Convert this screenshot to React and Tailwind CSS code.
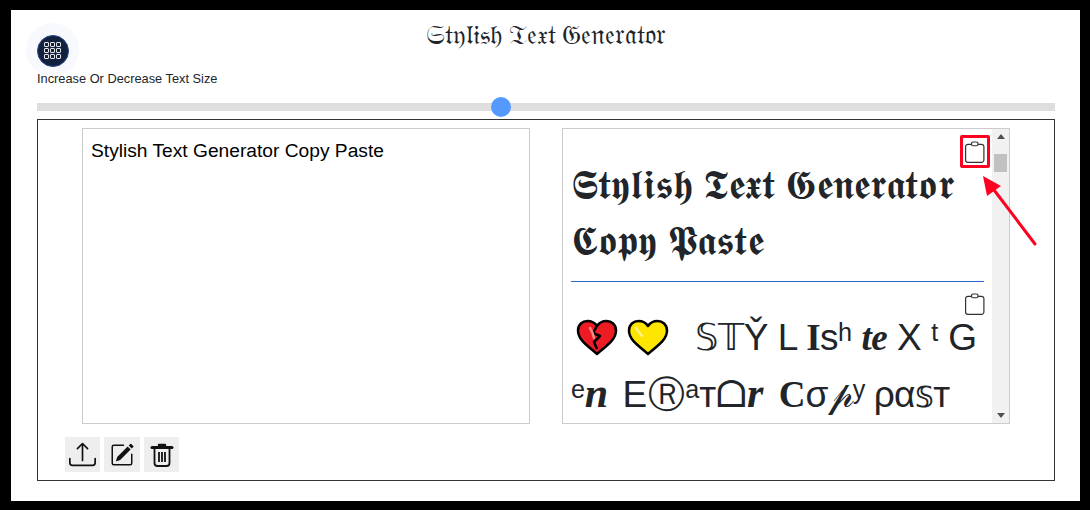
import React from 'react';

const ClipIcon = ({ className }) => (
    <svg viewBox="0 0 20 23" preserveAspectRatio="none" className={className} fill="none" stroke="#333" strokeWidth="1.2">
        <path d="M6.500 3.500H3a2.400 2.400 0 0 0-2.400 2.400v14a2.400 2.400 0 0 0 2.400 2.400h13.500a2.400 2.400 0 0 0 2.400-2.400v-14a2.400 2.400 0 0 0-2.400-2.400H13" />
        <rect x="6.500" y="1" width="6.500" height="4" rx="1.500" />
    </svg>
);

const heart = "M21 35 C12 27 2 21 2 11.500 C2 5.500 6.500 2 11.500 2 C15.500 2 19 4 21 7 C23 4 26.500 2 30.500 2 C35.500 2 40 5.500 40 11.500 C40 21 30 27 21 35Z";

const BrokenHeart = () => (
    <svg viewBox="0 0 42 38" className="w-[42px] h-[38px]">
        <path d={heart} fill="#ed1c24" stroke="#000" strokeWidth="2.500" strokeLinejoin="round" />
        <path d="M21 7 L17 14 L24 17 L18 23 L21 30" fill="none" stroke="#000" strokeWidth="2.500" strokeLinejoin="round" />
        <path d="M14 9 C16 12 17 14 18 19" fill="none" stroke="#f7897f" strokeWidth="2.500" strokeLinecap="round" />
    </svg>
);

const YellowHeart = () => (
    <svg viewBox="0 0 42 38" className="w-[42px] h-[38px]">
        <path d={heart} fill="#ffe600" stroke="#000" strokeWidth="2.500" strokeLinejoin="round" />
        <path d="M9 9 C11 12 13 14 15 17" fill="none" stroke="#fff38a" strokeWidth="2.500" strokeLinecap="round" />
    </svg>
);

const App = () => {
    return (
        <div className="w-[1090px] h-[510px] bg-black pt-[10px] pl-[11px] pr-[10px] pb-[9px] overflow-hidden font-['Liberation_Sans',sans-serif] text-[#212529]">
            <div className="relative w-full h-full bg-white pl-[26px] pr-[25px] flex flex-col">
                {/* Title + size control */}
                <div className="relative h-[83px]">
                    <h1 className="absolute left-0 right-0 top-[9px] text-center text-[27px] leading-[32px] font-normal font-['Liberation_Serif','DejaVu_Serif',serif]">𝔖𝔱𝔶𝔩𝔦𝔰𝔥 𝔗𝔢𝔵𝔱 𝔊𝔢𝔫𝔢𝔯𝔞𝔱𝔬𝔯</h1>
                    <div className="absolute left-[-11px] top-[13px] w-[53px] h-[53px] pt-[2px] rounded-full bg-[#f7f9fc] flex items-center justify-center">
                        <div className="w-8 h-8 rounded-full bg-[#14213d] border border-[#2a4a90] grid grid-cols-3 gap-[1px] p-[6.500px]">
                            {Array.from({ length: 9 }).map((_, i) => (
                                <span key={i} className="border-[1.500px] border-[#e5e7eb] rounded-[1px]" />
                            ))}
                        </div>
                    </div>
                    <p className="absolute left-0 top-[62px] text-[12.800px] leading-[14px]">Increase Or Decrease Text Size</p>
                </div>

                {/* Slider */}
                <div className="relative h-2 mt-[10px] bg-[#dedede]">
                    <div className="absolute left-[454px] top-[-6px] w-5 h-5 rounded-full bg-[#5599ff]" />
                </div>

                {/* Main box */}
                <div className="mt-2 h-[362px] border border-[#333] pt-2 flex flex-col">
                    <div className="flex h-[296px] pl-11 gap-8">
                        <div className="w-[448px] h-full border border-[#ccc] px-2 py-2 text-[19.200px] leading-[27px] text-black">
                            Stylish Text Generator Copy Paste
                        </div>
                        <div className="relative w-[448px] h-full border border-[#ccc] flex overflow-hidden">
                            <div className="w-[429px] pl-2 pr-2">
                                <div className="flex justify-end pt-[12px] h-[28px] -mr-px">
                                    <ClipIcon className="w-5 h-[22px]" />
                                </div>
                                <p className="text-[41px] tracking-[0.15px] leading-[56px] font-normal font-['Liberation_Serif','DejaVu_Serif',serif] whitespace-nowrap">𝕾𝖙𝖞𝖑𝖎𝖘𝖍 𝕿𝖊𝖝𝖙 𝕲𝖊𝖓𝖊𝖗𝖆𝖙𝖔𝖗<br />𝕮𝖔𝖕𝖞 𝕻𝖆𝖘𝖙𝖊</p>
                                <div className="mt-[12px] border-t border-[#2767d2]" />
                                <div className="flex justify-end pt-[11px] h-[33px] -mr-px">
                                    <ClipIcon className="w-5 h-[22px]" />
                                </div>
                                <div className="text-[37px] leading-[56px] whitespace-nowrap font-['Liberation_Sans','DejaVu_Sans',sans-serif]">
                                    <div className="flex items-center gap-[9px] h-[56px] pl-[5px] -mt-[5px]">
                                        <BrokenHeart /><YellowHeart />
                                        <span className="ml-[17px] tracking-[-0.5px]">𝕊𝕋Y̌ L <span className="font-['Liberation_Serif',serif] font-bold">I</span>sʰ <span className="font-['Liberation_Serif',serif] font-bold italic">te</span> X ᵗ G</span>
                                    </div>
                                    <div className="-mt-[1px]">ᵉ<span className="font-['Liberation_Serif',serif] font-bold italic text-[42px]">n</span> <span className="ml-[4px]">E</span> <span className="-ml-[9px]">Ⓡ</span>ᵃᴛᗝ<span className="font-['Liberation_Serif',serif] font-bold italic text-[42px]">r</span> <span className="ml-[5px] font-['Liberation_Serif',serif] font-bold">C</span><span className="tracking-[-0.7px]">σ𝓅ʸ ρα𝕤ᴛ</span></div>
                                </div>
                            </div>
                            {/* Scrollbar */}
                            <div className="w-[17px] h-full bg-[#f1f1f1] flex flex-col items-center justify-between py-[5px] relative">
                                <svg viewBox="0 0 8 5" className="w-2 h-[5px]"><path d="M4 0 8 5H0Z" fill="#505050" /></svg>
                                <div className="absolute top-[25px] left-[2px] w-[13px] h-[18px] bg-[#c1c1c1]" />
                                <svg viewBox="0 0 8 5" className="w-2 h-[5px]"><path d="M0 0H8L4 5Z" fill="#505050" /></svg>
                            </div>
                        </div>
                    </div>
                    <div className="flex gap-1 pl-[27px] mt-[13px]">
                        <button className="w-[35px] h-[35px] bg-[#eee] flex items-center justify-center">
                            <svg viewBox="0 0 16 16" className="w-[27px] h-[27px]" fill="#111"><path d="M.5 9.900a.5.500 0 0 1 .5.500v2.500a1 1 0 0 0 1 1h12a1 1 0 0 0 1-1v-2.500a.5.500 0 0 1 1 0v2.500a2 2 0 0 1-2 2H2a2 2 0 0 1-2-2v-2.500a.5.500 0 0 1 .5-.5z" /><path d="M7.646 1.146a.5.500 0 0 1 .708 0l3 3a.5.500 0 0 1-.708.708L8.500 2.707V11.500a.5.500 0 0 1-1 0V2.707L5.354 4.854a.5.500 0 1 1-.708-.708l3-3z" /></svg>
                        </button>
                        <button className="w-9 h-[35px] bg-[#eee] flex items-center justify-center">
                            <svg viewBox="0 0 16 16" className="w-6 h-6" fill="#111"><path d="M15.502 1.940a.5.500 0 0 1 0 .706L14.459 3.690l-2-2L13.502.646a.5.500 0 0 1 .707 0l1.293 1.293zm-1.750 2.456-2-2L4.939 9.210a.5.500 0 0 0-.121.196l-.805 2.414a.25.25 0 0 0 .316.316l2.414-.805a.5.500 0 0 0 .196-.12l6.813-6.814z" /><path fillRule="evenodd" d="M1 13.500A1.500 1.500 0 0 0 2.500 15h11a1.500 1.500 0 0 0 1.500-1.500v-6a.5.500 0 0 0-1 0v6a.5.500 0 0 1-.5.5h-11a.5.500 0 0 1-.5-.5v-11a.5.500 0 0 1 .5-.5H9a.5.500 0 0 0 0-1H2.500A1.500 1.500 0 0 0 1 2.500v11z" /></svg>
                        </button>
                        <button className="w-[35px] h-[35px] bg-[#eee] flex items-center justify-center">
                            <svg viewBox="0 0 24 26" className="w-[24px] h-[26px]" fill="none" stroke="#111" strokeWidth="1.800"><path d="M2 5.500h20" strokeWidth="3" strokeLinecap="round" /><path d="M9 3h6" strokeWidth="2.500" strokeLinecap="round" /><path d="M4.500 7v14a3 3 0 0 0 3 3h9a3 3 0 0 0 3-3V7" /><path d="M9 10v10M12 10v10M15 10v10" /></svg>
                        </button>
                    </div>
                </div>

                {/* Annotation over the screenshot */}
                <div className="absolute left-[949px] top-[125px] w-[30px] h-[33px] border-[3px] border-[#ff0020] rounded-[2px]" />
                <svg className="absolute left-[960px] top-[160px] w-[70px] h-[90px]" viewBox="0 0 70 90">
                    <path d="M64 74 L20 16" stroke="#ff0020" strokeWidth="3" strokeLinecap="round" />
                    <path d="M12 6 L16 26 L30 16Z" fill="#ff0020" />
                </svg>
            </div>
        </div>
    );
};

export default App;
